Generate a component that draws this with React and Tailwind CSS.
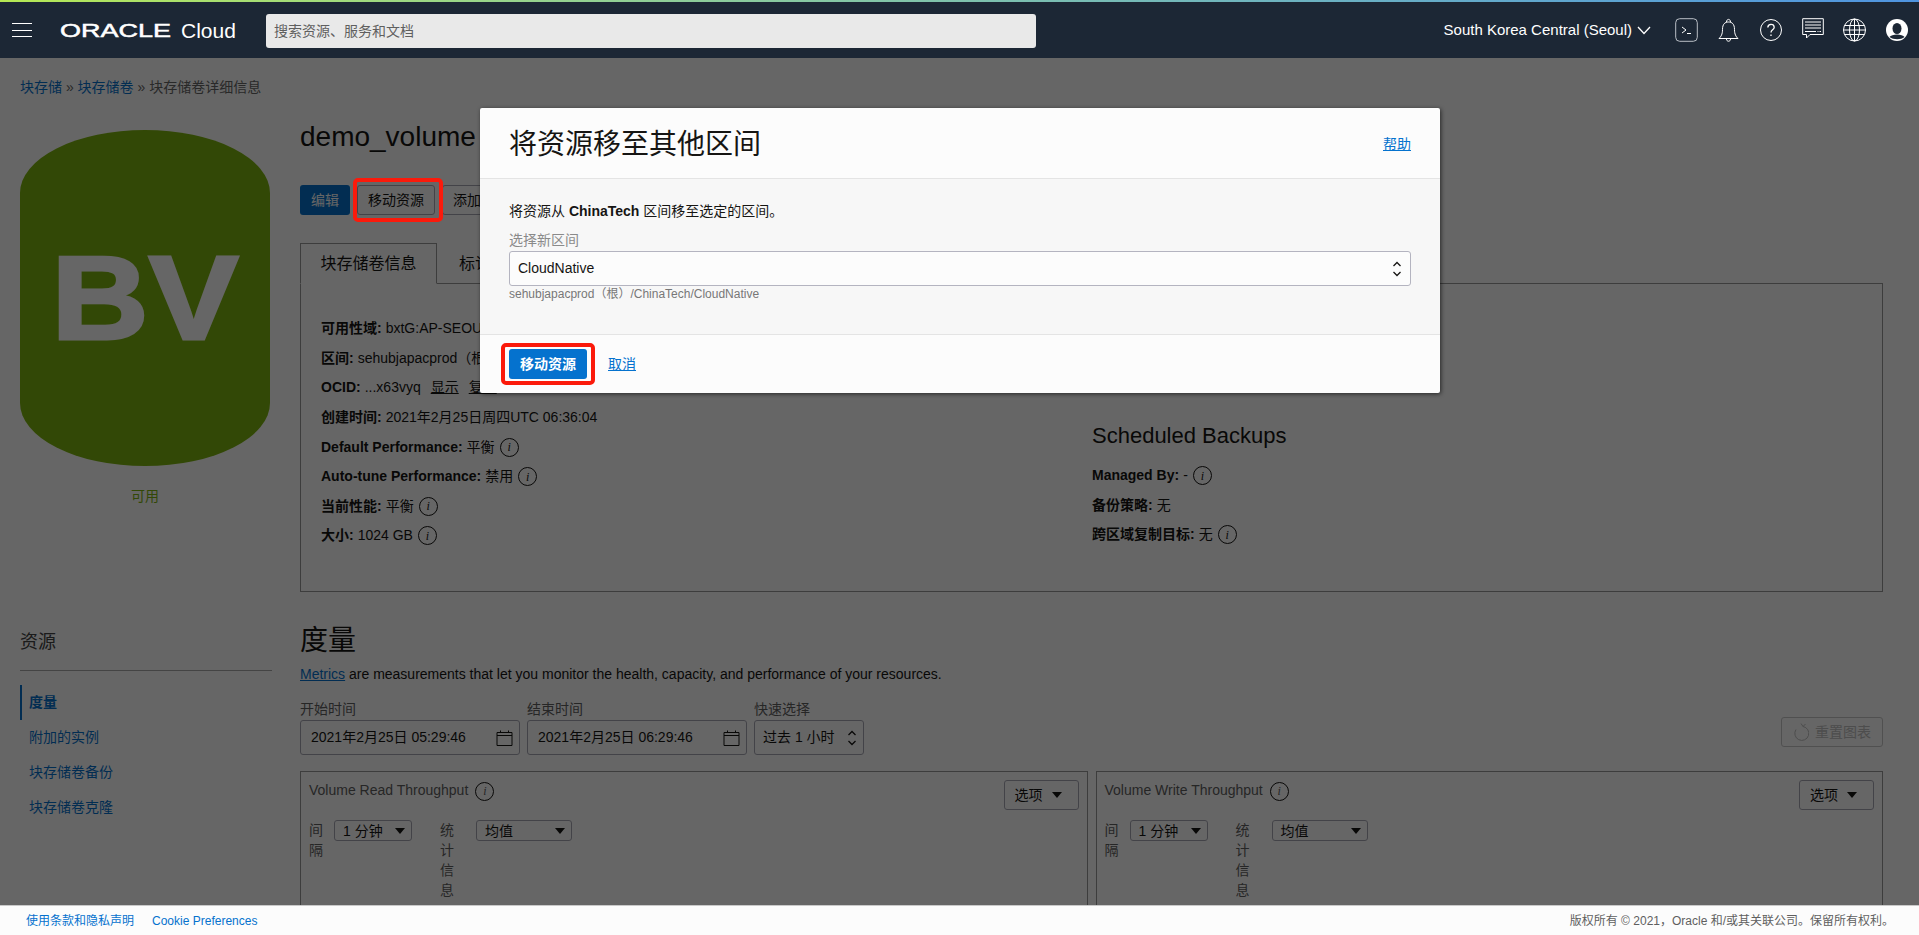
const Info = () => (
  <span className="inline-flex w-[19px] h-[19px] ml-[5px] rounded-full border border-[#161513] items-center justify-center align-middle text-[12px] italic font-['Liberation_Serif',serif] leading-none">
    i
  </span>
);

const Row = ({ label, children }) => (
  <div className="h-[29.6px] flex items-center whitespace-nowrap">
    <b className="mr-1">{label}:</b>
    {children}
  </div>
);

const Arrow = () => (
  <span className="w-0 h-0 border-x-[5px] border-x-transparent border-t-[6px] border-t-[#161513]" />
);

const Updown = ({ color = "#161513" }) => (
  <svg width="10" height="16" viewBox="0 0 10 16" fill="none" stroke={color} strokeWidth="1.3">
    <path d="M1.5 5 5 1.5 8.5 5M1.5 11 5 14.5 8.5 11" />
  </svg>
);

const Calendar = () => (
  <svg width="17" height="16" viewBox="0 0 17 16" fill="none" stroke="#161513" strokeWidth="1">
    <path d="M1 2.5h15v13H1zM1 5.5h15M4.5 .5v2M12.5 .5v2" />
  </svg>
);

const DateInput = ({ value }) => (
  <div className="w-[220px] h-[35px] border border-[#a9a9b5] rounded-[3px] flex items-center justify-between pl-[10px] pr-[6px]">
    <span>{value}</span>
    <Calendar />
  </div>
);

const Field = ({ children }) => (
  <div className="border border-[#a9a9b5] rounded-[3px] h-[21px] flex items-center justify-between pl-2 pr-[6px]">
    {children}
  </div>
);

const Chart = ({ title }) => (
  <div className="flex-1 h-[220px] border border-[#9a9a9a] px-2 relative">
    <div className="flex items-start justify-between pt-2">
      <div className="text-[#5f5f5f] flex items-center">
        {title}
        <span className="ml-[2px]">
          <Info />
        </span>
      </div>
      <button className="w-[75px] h-[30px] border border-[#a9a9b5] rounded-[3px] flex items-center pl-[10px] gap-[9px]">
        选项
        <Arrow />
      </button>
    </div>
    <div className="flex mt-[10px] text-[#5f5f5f] leading-[20px]">
      <div className="w-[14px]">间隔</div>
      <div className="w-[78px] ml-[11px]">
        <Field>
          <span className="text-[#161513]">1 分钟</span>
          <Arrow />
        </Field>
      </div>
      <div className="w-[14px] ml-[28px]">统计信息</div>
      <div className="w-[96px] ml-[22px]">
        <Field>
          <span className="text-[#161513]">均值</span>
          <Arrow />
        </Field>
      </div>
    </div>
  </div>
);

export default function App() {
  const menu = ["附加的实例", "块存储卷备份", "块存储卷克隆"];

  return (
    <div className="h-screen flex flex-col overflow-hidden bg-white text-[14px] text-[#161513] font-['Liberation_Sans','Noto_Sans_CJK_SC',sans-serif]">
      <div className="h-[2px] shrink-0 bg-gradient-to-r from-[#b5e853] to-[#4f94e0]" />
      <header className="h-[56px] shrink-0 bg-[#1c2735] flex items-center text-white">
        <div className="w-[20px] ml-3 flex flex-col gap-[5.5px]">
          <span className="h-px bg-white" />
          <span className="h-px bg-white" />
          <span className="h-px bg-white" />
        </div>
        <span className="w-[114px] ml-[28px] text-[19px] leading-none scale-x-[1.42] origin-left [-webkit-text-stroke:0.5px_white]">ORACLE</span>
        <span className="ml-[7px] w-[57px] text-[21px] leading-none">Cloud</span>
        <div className="ml-[28px] w-[770px] h-[34px] bg-[#e9e9e9] rounded-[3px] flex items-center pl-2 text-[#5f5f5f] mt-[2px]">
          搜索资源、服务和文档
        </div>
        <div className="ml-auto flex items-center pr-[11px]">
          <span className="text-[15px]">South Korea Central (Seoul)</span>
          <svg className="ml-[5px]" width="14" height="9" viewBox="0 0 14 9" fill="none" stroke="white" strokeWidth="1.3">
            <path d="M1 1l6 6.5L13 1" />
          </svg>
          <svg className="ml-6" width="23" height="24" viewBox="0 0 23 24" fill="none" stroke="white" strokeWidth="1">
            <rect x=".7" y=".7" width="21.6" height="22.6" rx="4" stroke="#b9bec5" />
            <path d="M7 9l4 3-4 3M12 15.5h4" />
          </svg>
          <svg className="ml-[20px]" width="21" height="25" viewBox="0 0 21 25" fill="none" stroke="white" strokeWidth="1">
            <path d="M1 20.5c2-2 3.500-4 3.500-9C4.500 6 7 4 10.500 4s6 2 6 7.500c0 5 1.500 7 3.500 9zM8.500 4c0-3.500 4-3.500 4 0M8.500 21c0 3 4 3 4 0" />
          </svg>
          <svg className="ml-[21px]" width="22" height="22" viewBox="0 0 22 22" fill="none" stroke="white" strokeWidth="1">
            <circle cx="11" cy="11" r="10.500" />
            <path d="M7.800 8.500C8 4.500 14 4.500 14.200 8.200c.1 2.600-3.200 2.600-3.200 5.300M11 15.500v1.500" strokeWidth="1.300" />
          </svg>
          <svg className="ml-[20px]" width="22" height="24" viewBox="0 0 22 24" fill="none" stroke="white" strokeWidth="1">
            <path d="M.7.700h20.600v15.800H8l-3.500 3.500v-3.500H.7z" />
            <path d="M3 4h16M3 7h16M3 10h16M3 13.500h11M15.500 13.500h1M17.500 13.500h1.500" />
          </svg>
          <svg className="ml-[19px]" width="23" height="24" viewBox="0 0 23 24" fill="none" stroke="white" strokeWidth="1">
            <circle cx="11.500" cy="12" r="11" />
            <ellipse cx="11.500" cy="12" rx="5" ry="11" />
            <path d="M11.500 1v22M1.500 7.500h20M.5 12h22M1.500 16.500h20" />
          </svg>
          <svg className="ml-[20px]" width="22" height="24" viewBox="0 0 22 24">
            <circle cx="11" cy="12" r="11" fill="white" />
            <ellipse cx="11" cy="10.500" rx="4.500" ry="5.500" fill="#1c2735" />
            <path d="M3.500 19c2-3.500 13-3.500 15 0-3.500 3-11 3-15 0z" fill="#1c2735" />
          </svg>
        </div>
      </header>

      <main className="flex-1 min-h-0 relative overflow-hidden">
        <div className="pt-5 pl-5 h-[60px] leading-[18px] text-[#666]">
          <a className="text-[#0572ce]">块存储</a> » <a className="text-[#0572ce]">块存储卷</a> » 块存储卷详细信息
        </div>
        <div className="flex">
          <aside className="w-[300px] shrink-0 pl-5 pr-7 pt-3">
            <div className="h-[336px] w-[250px] rounded-[125px/63px] bg-[#7eb40f] flex items-center justify-center text-white text-[118px] font-bold leading-none">
              <span className="scale-x-[1.14] [-webkit-text-stroke:3px_white]">BV</span>
            </div>
            <div className="w-[250px] mt-5 h-5 leading-5 text-center text-[#7eb40f]">可用</div>
            <h3 className="mt-[123px] text-[18px] leading-[26px] text-[#444]">资源</h3>
            <div className="mt-[15px] border-t border-[#aaa]" />
            <nav className="mt-[14px] text-[14px] text-[#0572ce]">
              <div className="h-[35px] flex items-center pl-[7px] border-l-2 border-[#0572ce] font-bold">度量</div>
              {menu.map((m) => (
                <div key={m} className="h-[35px] flex items-center pl-[9px]">{m}</div>
              ))}
            </nav>
          </aside>

          <section className="w-[1583px] shrink-0">
            <h1 className="text-[28px] leading-[38px] whitespace-nowrap">demo_volume</h1>
            <div className="mt-[29px] flex gap-[7px] h-[30px]">
              <button className="w-[50px] rounded-[3px] bg-[#0572ce] text-white">编辑</button>
              <button className="w-[78px] rounded-[3px] border border-[#a9a9b5]">移动资源</button>
              <button className="w-[78px] rounded-[3px] border border-[#a9a9b5]">添加标记</button>
            </div>
            <div className="mt-[28px] flex h-[41px] relative">
              <div className="w-[137px] border border-[#9a9a9a] border-b-white text-[16px] flex items-center justify-center relative">块存储卷信息</div>
              <div className="pl-[22px] flex items-center text-[16px]">标记</div>
            </div>
            <div className="h-[309px] -mt-px border border-[#9a9a9a] pl-5 pt-[30px] flex">
              <div className="w-[771px]">
                <Row label="可用性域">bxtG:AP-SEOUL-1-AD-1</Row>
                <Row label="区间">sehubjapacprod（根）/ChinaTech</Row>
                <Row label="OCID">
                  ...x63vyq<u className="ml-[10px]">显示</u>
                  <u className="ml-[10px]">复制</u>
                </Row>
                <Row label="创建时间">2021年2月25日周四UTC 06:36:04</Row>
                <Row label="Default Performance">平衡<Info /></Row>
                <Row label="Auto-tune Performance">禁用<Info /></Row>
                <Row label="当前性能">平衡<Info /></Row>
                <Row label="大小">1024 GB<Info /></Row>
              </div>
              <div className="pt-[107px]">
                <h3 className="text-[22px] leading-[30px]">Scheduled Backups</h3>
                <div className="mt-[10px]">
                  <Row label="Managed By">-<Info /></Row>
                  <Row label="备份策略">无</Row>
                  <Row label="跨区域复制目标">无<Info /></Row>
                </div>
              </div>
            </div>
            <h2 className="mt-[29px] text-[28px] leading-[40px]">度量</h2>
            <p className="mt-[3px] leading-5">
              <u className="text-[#0572ce]">Metrics</u> are measurements that let you monitor the health, capacity, and performance of your resources.
            </p>
            <div className="mt-[17px] flex gap-[7px] items-end">
              <div>
                <label className="block leading-[17px] mb-[2px] text-[#5f5f5f]">开始时间</label>
                <DateInput value="2021年2月25日 05:29:46" />
              </div>
              <div>
                <label className="block leading-[17px] mb-[2px] text-[#5f5f5f]">结束时间</label>
                <DateInput value="2021年2月25日 06:29:46" />
              </div>
              <div>
                <label className="block leading-[17px] mb-[2px] text-[#5f5f5f]">快速选择</label>
                <div className="w-[110px] h-[35px] border border-[#a9a9b5] rounded-[3px] flex items-center justify-between pl-2 pr-[6px]">
                  过去 1 小时
                  <Updown />
                </div>
              </div>
              <button className="ml-auto mb-[8px] w-[102px] h-[30px] border border-[#c8c8c8] rounded-[3px] flex items-center justify-center gap-[6px] text-[#c0c0c0]">
                <svg width="16" height="20" viewBox="0 0 16 20" fill="none" stroke="#c0c0c0" strokeWidth="1">
                  <path d="M10 4.500a7 7 0 1 1-7 3M10 4.500 8 1.500M10 4.500 12.500 2" />
                </svg>
                重置图表
              </button>
            </div>
            <div className="mt-4 flex gap-2">
              <Chart title="Volume Read Throughput" />
              <Chart title="Volume Write Throughput" />
            </div>
          </section>
        </div>

        <div className="absolute inset-0 bg-black/60" />
        <div className="absolute left-[353px] top-[120px] w-[90px] h-[44px] border-[4px] border-[#fb1a0b] rounded-[5px]" />

        <div className="absolute left-[480px] top-[50px] w-[960px] h-[285px] bg-[#fcfcfc] rounded-[2px] shadow-[1px_1px_4px_rgba(0,0,0,0.6)] flex flex-col">
          <div className="h-[71px] shrink-0 border-b border-[#e4e4e4] flex items-center justify-between px-[29px] pt-[3px]">
            <h2 className="text-[28px]">将资源移至其他区间</h2>
            <a className="text-[#0572ce] underline">帮助</a>
          </div>
          <div className="h-[156px] shrink-0 bg-[#f7f7f7] border-b border-[#e4e4e4] px-[29px] pt-[22px]">
            <p className="leading-5">将资源从 <b>ChinaTech</b> 区间移至选定的区间。</p>
            <label className="block mt-[9px] leading-[20px] text-[#8a8a8a]">选择新区间</label>
            <div className="h-[35px] mt-px bg-[#fcfcfc] border border-[#b4b4c0] rounded-[3px] flex items-center justify-between pl-2 pr-[8px]">
              CloudNative
              <Updown />
            </div>
            <p className="text-[12px] leading-[16px] text-[#777]">sehubjapacprod（根）/ChinaTech/CloudNative</p>
          </div>
          <div className="flex-1 relative flex items-center px-[29px] gap-[21px]">
            <button className="relative w-[78px] h-[30px] rounded-[3px] bg-[#0572ce] text-white font-bold">
              移动资源
              <span className="absolute -left-2 -top-[6px] w-[94px] h-[42px] border-[4px] border-[#fb1a0b] rounded-[5px]" />
            </button>
            <a className="text-[#0572ce] underline">取消</a>
          </div>
        </div>
      </main>

      <footer className="h-[30px] shrink-0 bg-[#fcfcfc] border-t border-[#c9c9c9] flex items-center justify-between pl-[26px] pr-[25px] text-[12px]">
        <div className="flex gap-[18px] text-[#0572ce]">
          <a>使用条款和隐私声明</a>
          <a>Cookie Preferences</a>
        </div>
        <span className="text-[#5f5f5f]">版权所有 © 2021，Oracle 和/或其关联公司。保留所有权利。</span>
      </footer>
    </div>
  );
}
